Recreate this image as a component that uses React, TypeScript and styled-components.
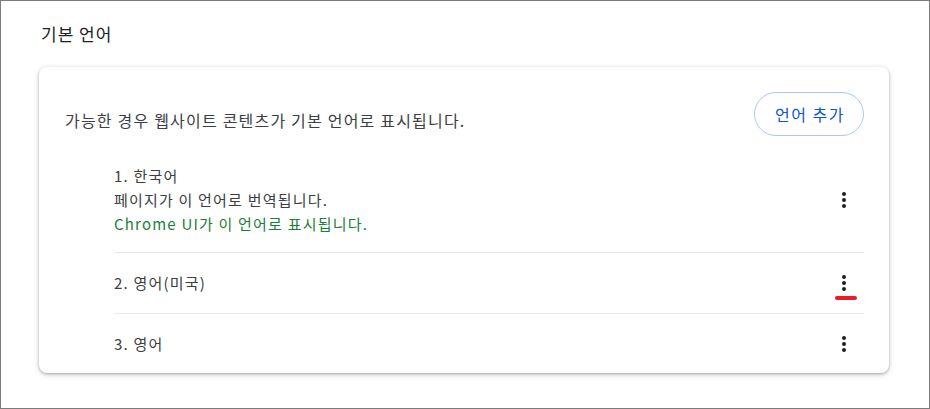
import React from 'react'
import styled, { createGlobalStyle } from 'styled-components'

// ------------------------------------------------ global
const GlobalStyle = createGlobalStyle`
  html, body {
    margin: 0;
    padding: 0;
    background: #ffffff;
  }
  body {
    font-family: 'Noto Sans CJK KR', 'Noto Sans', sans-serif;
    color: #3c4043;
  }
`

// ------------------------------------------------ data
interface ILanguage {
  name: string
  notes?: { text: string; accent?: boolean }[]
  marked?: boolean
}

const languages: ILanguage[] = [
  {
    name: '1. 한국어',
    notes: [
      { text: '페이지가 이 언어로 번역됩니다.' },
      { text: 'Chrome UI가 이 언어로 표시됩니다.', accent: true }
    ]
  },
  { name: '2. 영어(미국)', marked: true },
  { name: '3. 영어' }
]

// ------------------------------------------------ style
const Frame = styled.div`
  box-sizing: border-box;
  width: 930px;
  height: 409px;
  border: 1px solid #7b7b7b;
  padding: 21px 40px 0 38px;
`
const Heading = styled.h2`
  margin: 0 0 21px 2px;
  font-size: 17px;
  font-weight: 400;
  letter-spacing: 1px;
  line-height: 24px;
  color: #202124;
`
const Card = styled.section`
  background: #ffffff;
  border-radius: 8px;
  box-shadow: 0 1px 3px rgba(0, 0, 0, 0.28), 0 2px 7px rgba(0, 0, 0, 0.12);
  padding: 25px 25px 0 25px;
`
const Header = styled.div`
  display: flex;
  justify-content: space-between;
  align-items: flex-start;
  margin-bottom: 12px;
`
const Description = styled.p`
  margin: 18px 0 0 1px;
  font-size: 16px;
  letter-spacing: 1.2px;
  line-height: 20px;
  color: #3c4043;
`
const AddButton = styled.button`
  box-sizing: border-box;
  height: 44px;
  width: 110px;
  border: 1px solid #a8c7fa;
  border-radius: 22px;
  background: #ffffff;
  color: #0b57d0;
  font-family: inherit;
  font-size: 16px;
  letter-spacing: 1.5px;
  padding: 0 0 0 2px;
  cursor: pointer;
`
const List = styled.div`
  margin-left: 50px;
  display: flex;
  flex-direction: column;
`
const Row = styled.div<{ $first?: boolean }>`
  display: flex;
  align-items: center;
  justify-content: space-between;
  min-height: ${(p) => (p.$first ? '60px' : '61px')};
  box-sizing: border-box;
  padding: ${(p) => (p.$first ? '16px 0' : '0')};
  border-top: ${(p) => (p.$first ? 'none' : '1px solid #e8e8e8')};
  &:last-child {
    min-height: 60px;
  }
`
const RowText = styled.div`
  display: flex;
  flex-direction: column;
  font-size: 15px;
  letter-spacing: 1.2px;
  line-height: 24px;
  color: #3c4043;
`
const Note = styled.span<{ $accent?: boolean }>`
  color: ${(p) => (p.$accent ? '#188038' : '#3c4043')};
`
const IconButton = styled.button`
  position: relative;
  width: 40px;
  height: 40px;
  border: none;
  background: transparent;
  padding: 0;
  display: flex;
  align-items: center;
  justify-content: center;
  cursor: pointer;
`
const Mark = styled.span`
  position: absolute;
  left: 11px;
  top: 33px;
  width: 22px;
  height: 4px;
  border-radius: 2px;
  background: #ec1c24;
`

// ------------------------------------------------ comp
const MoreIcon: React.FC = () => (
  <svg width={24} height={24} viewBox="0 0 24 24">
    <circle cx={12} cy={6} r={2} fill="#1f1f1f" />
    <circle cx={12} cy={12} r={2} fill="#1f1f1f" />
    <circle cx={12} cy={18} r={2} fill="#1f1f1f" />
  </svg>
)

export default function App() {
  return (
    <Frame>
      <GlobalStyle />
      <Heading>기본 언어</Heading>
      <Card>
        <Header>
          <Description>가능한 경우 웹사이트 콘텐츠가 기본 언어로 표시됩니다.</Description>
          <AddButton>언어 추가</AddButton>
        </Header>
        <List>
          {languages.map((lang, i) => (
            <Row key={lang.name} $first={i === 0}>
              <RowText>
                <span>{lang.name}</span>
                {lang.notes?.map((n) => (
                  <Note key={n.text} $accent={n.accent}>
                    {n.text}
                  </Note>
                ))}
              </RowText>
              <IconButton aria-label="더보기">
                <MoreIcon />
                {lang.marked && <Mark />}
              </IconButton>
            </Row>
          ))}
        </List>
      </Card>
    </Frame>
  )
}
